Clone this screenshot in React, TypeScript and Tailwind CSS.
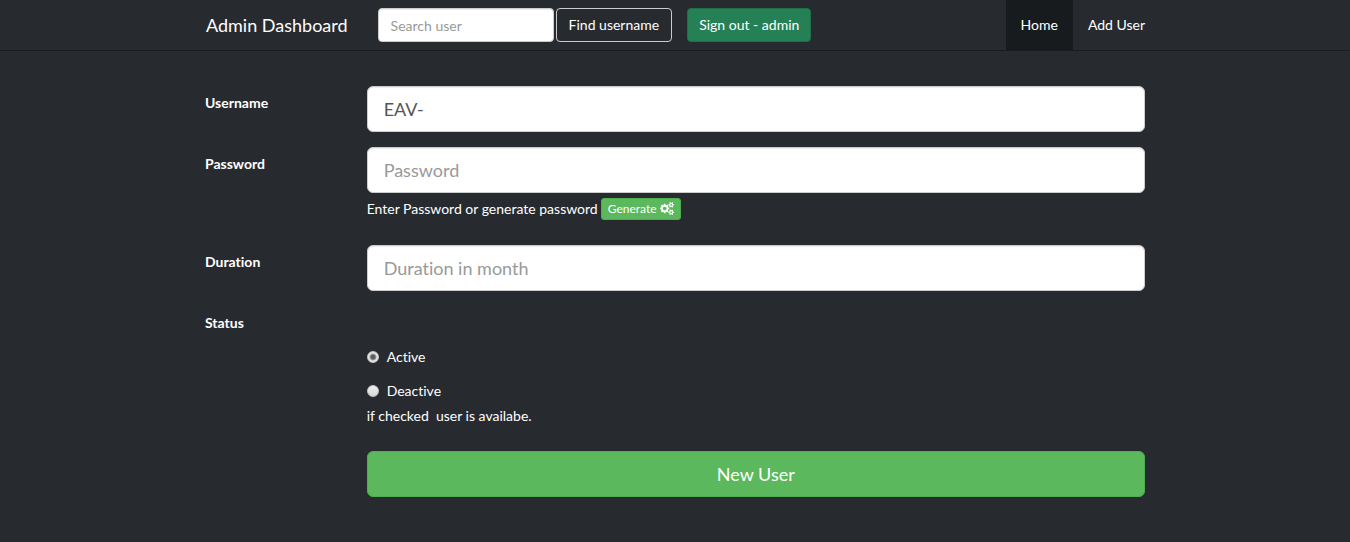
import { useState } from "react";
import type { ReactNode } from "react";

const largeInput =
  "block h-[46px] w-full rounded-md border border-[#cccccc] bg-white px-4 text-lg leading-6 text-[#555555] shadow-[inset_0_1px_1px_rgba(0,0,0,0.075)] outline-none placeholder:text-[#999999]";

const radio =
  "size-3 shrink-0 appearance-none rounded-full border border-[#c4c4c4] bg-linear-to-b from-[#eeeeee] to-[#d8d8d8] checked:bg-[radial-gradient(circle,#5e5e5e_0_2px,#e8e8e8_4px)]";

function CogsIcon() {
  return (
    <svg viewBox="0 0 1920 1792" className="inline-block h-[13px] w-[14px] align-[-2px]" fill="currentColor" aria-hidden="true">
      <path d="M896 896q0-106-75-181t-181-75-181 75-75 181 75 181 181 75 181-75 75-181zm768 512q0-52-38-90t-90-38-90 38-38 90q0 53 37.5 90.5t90.5 37.5 90.5-37.5 37.5-90.5zm0-1024q0-52-38-90t-90-38-90 38-38 90q0 53 37.5 90.5t90.5 37.5 90.5-37.5 37.5-90.5zm-384 421v185q0 10-7 19.5t-16 10.5l-155 24q-11 35-32 76 34 48 90 115 7 11 7 20 0 12-7 19-23 30-82.5 89.5t-78.5 59.5q-11 0-21-7l-115-90q-37 19-77 31-11 108-23 155-7 24-30 24h-186q-11 0-20-7.5t-10-17.5l-23-153q-34-10-75-31l-118 89q-7 7-20 7-11 0-21-8-144-133-144-160 0-9 7-19 10-14 41-53t47-61q-23-44-35-82l-152-24q-10-1-17-9.5t-7-19.5v-185q0-10 7-19.5t16-10.5l155-24q11-35 32-76-34-48-90-115-7-11-7-20 0-12 7-20 22-30 82-89t79-59q11 0 21 7l115 90q34-18 77-32 11-108 23-154 7-24 30-24h186q11 0 20 7.5t10 17.5l23 153q34 10 75 31l118-89q8-7 20-7 11 0 21 8 144 133 144 160 0 8-7 19-12 16-42 54t-45 60q23 48 34 82l152 23q10 2 17 10.5t7 19.5zm640 533v140q0 16-149 31-12 27-30 52 51 113 51 138 0 4-4 7-122 71-124 71-8 0-46-47t-52-68q-20 2-30 2t-30-2q-14 21-52 68t-46 47q-2 0-124-71-4-3-4-7 0-25 51-138-18-25-30-52-149-15-149-31v-140q0-16 149-31 13-29 30-52-51-113-51-138 0-4 4-7 4-2 35-20t59-34 30-16q8 0 46 46.5t52 67.5q20-2 30-2t30 2q51-71 92-112l6-2q4 0 124 70 4 3 4 7 0 25-51 138 17 23 30 52 149 15 149 31zm0-1024v140q0 16-149 31-12 27-30 52 51 113 51 138 0 4-4 7-122 71-124 71-8 0-46-47t-52-68q-20 2-30 2t-30-2q-14 21-52 68t-46 47q-2 0-124-71-4-3-4-7 0-25 51-138-18-25-30-52-149-15-149-31v-140q0-16 149-31 13-29 30-52-51-113-51-138 0-4 4-7 4-2 35-20t59-34 30-16q8 0 46 46.5t52 67.5q20-2 30-2t30 2q51-71 92-112l6-2q4 0 124 70 4 3 4 7 0 25-51 138 17 23 30 52 149 15 149 31z" />
    </svg>
  );
}

function Row({ label, children }: { label: ReactNode; children: ReactNode }) {
  return (
    <div className="grid grid-cols-6">
      <div className="px-[15px] pt-[7px] font-bold">{label}</div>
      <div className="col-span-5 px-[15px]">{children}</div>
    </div>
  );
}

export default function App() {
  const [status, setStatus] = useState("active");

  return (
    <div className="min-h-screen bg-[#272b30] font-['Lato',sans-serif] text-sm leading-5 text-white [font-variant-ligatures:none]">
      <header className="border-b border-[#1a1d20]">
        <div className="mx-auto flex h-[50px] max-w-[970px] items-center pr-[15px] pl-4">
          <a href="#" className="text-lg">
            Admin Dashboard
          </a>
          <form className="ml-[30px] flex gap-[2px]" onSubmit={(e) => e.preventDefault()}>
            <input
              type="text"
              aria-label="Search user"
              placeholder="Search user"
              className="h-[34px] w-44 rounded border border-[#cccccc] bg-white px-3 text-[#555555] shadow-[inset_0_1px_1px_rgba(0,0,0,0.075)] outline-none placeholder:text-[#999999]"
            />
            <button type="submit" className="h-[34px] rounded border border-[#cccccc] px-3">
              Find username
            </button>
          </form>
          <button type="button" className="ml-[15px] h-[34px] rounded border border-[#1f7049] bg-[#258056] px-[11px]">
            Sign out - admin
          </button>
          <nav className="ml-auto flex self-stretch">
            <a href="#" aria-current="page" className="flex items-center bg-[#181b1e] px-[15px]">
              Home
            </a>
            <a href="#" className="flex items-center pl-[15px]">
              Add User
            </a>
          </nav>
        </div>
      </header>

      <main className="mx-auto max-w-[970px] pt-[35px]">
        <form className="flex flex-col gap-[15px]" onSubmit={(e) => e.preventDefault()}>
          <Row label={<label htmlFor="username">Username</label>}>
            <input id="username" type="text" defaultValue="EAV-" className={largeInput} />
          </Row>
          <Row label={<label htmlFor="password">Password</label>}>
            <input id="password" type="text" placeholder="Password" className={largeInput} />
            <p className="flex items-center gap-[3px] pt-[5px] pb-[10px]">
              Enter Password or generate password
              <button
                type="button"
                className="h-[22px] rounded-[3px] border border-[#4cae4c] bg-[#5cb85c] px-[6px] text-xs leading-[18px]"
              >
                Generate <CogsIcon />
              </button>
            </p>
          </Row>
          <Row label={<label htmlFor="duration">Duration</label>}>
            <input id="duration" type="text" placeholder="Duration in month" className={largeInput} />
          </Row>
          <Row label={<span id="status">Status</span>}>
            <div role="radiogroup" aria-labelledby="status" className="flex flex-col items-start gap-[14px] pt-[41px]">
              <label className="flex items-center gap-2">
                <input
                  type="radio"
                  name="status"
                  className={radio}
                  checked={status === "active"}
                  onChange={() => setStatus("active")}
                />
                Active
              </label>
              <label className="flex items-center gap-2">
                <input
                  type="radio"
                  name="status"
                  className={radio}
                  checked={status === "deactive"}
                  onChange={() => setStatus("deactive")}
                />
                Deactive
              </label>
            </div>
            <p className="pt-[5px] pb-[10px]">if checked&nbsp; user is availabe.</p>
          </Row>
          <Row label={null}>
            <button
              type="submit"
              className="h-[46px] w-full rounded-md border border-[#4cae4c] bg-[#5cb85c] text-lg leading-6"
            >
              New User
            </button>
          </Row>
        </form>
      </main>
    </div>
  );
}
